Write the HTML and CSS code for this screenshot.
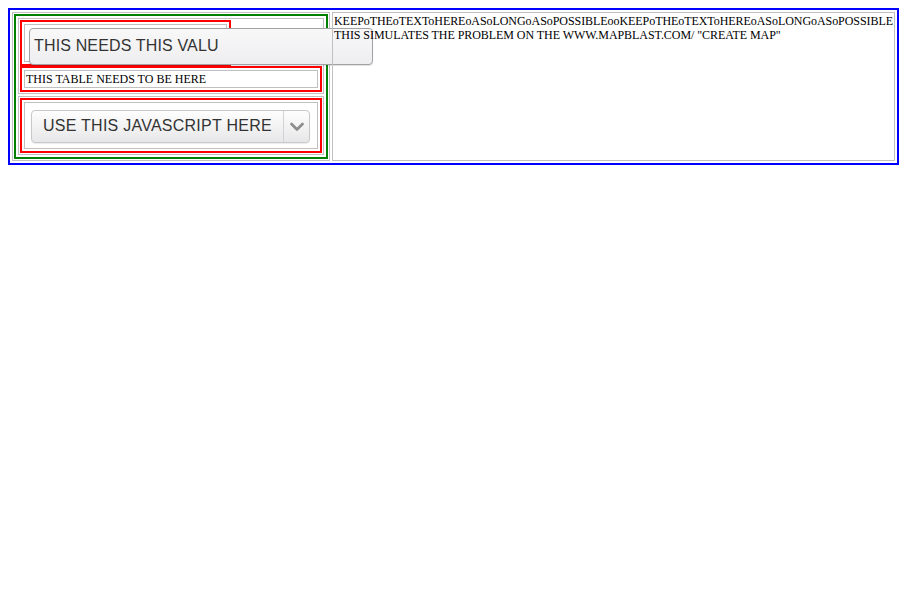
FILE: index.html
```html
<!DOCTYPE html>
<html>
<head>
<meta charset="utf-8">
<link rel="stylesheet" href="styles.css">
</head>
<body>
<table class="outer">
  <tr>
    <td class="c left">
      <table class="green">
        <tr>
          <td class="c">
            <table class="red r1">
              <tr>
                <td class="c">
                  <div class="inwrap"><input class="val" type="text" value="THIS NEEDS THIS VALU"></div>
                </td>
              </tr>
            </table>
            <table class="red full">
              <tr>
                <td class="c txt">THIS TABLE NEEDS TO BE HERE</td>
              </tr>
            </table>
          </td>
        </tr>
        <tr>
          <td class="c">
            <table class="red full">
              <tr>
                <td class="c">
                  <div class="sel">
                    <span class="sel-label">USE THIS JAVASCRIPT HERE</span>
                    <span class="sel-btn">
                      <svg width="14" height="10" viewBox="0 0 14 10"><polyline points="1.5,2 7,7.5 12.5,2" fill="none" stroke="#8c8c8c" stroke-width="2.6" stroke-linecap="round" stroke-linejoin="round"/></svg>
                    </span>
                  </div>
                </td>
              </tr>
            </table>
          </td>
        </tr>
      </table>
    </td>
    <td class="c right">KEEPoTHEoTEXToHEREoASoLONGoASoPOSSIBLEooKEEPoTHEoTEXToHEREoASoLONGoASoPOSSIBLE<br>THIS SIMULATES THE PROBLEM ON THE WWW.MAPBLAST.COM/ "CREATE MAP"</td>
  </tr>
</table>
</body>
</html>
```

FILE: styles.css
```css
html {
  overflow: hidden;
  background: #ffffff;
}
body {
  margin: 8px;
  font-family: "Liberation Serif", "Times New Roman", serif;
  font-size: 12px;
  color: #000;
}
table {
  border-collapse: separate;
  border-spacing: 2px;
  box-sizing: border-box;
}
.c {
  border: 1px solid #c0c0c0;
  padding: 1px;
  vertical-align: top;
  text-align: left;
}
.outer {
  border: 2px solid #0000ff;
}
.green {
  border: 2px solid #008000;
  width: 314px;
}
.red {
  border: 2px solid #ff0000;
}
.r1 {
  width: 211px;
}
.full {
  width: 100%;
}
.txt {
  line-height: 14px;
}
.right {
  white-space: nowrap;
  line-height: 14px;
  letter-spacing: -0.06px;
}
.inwrap {
  width: 199px;
  height: 32px;
}
.val {
  display: block;
  box-sizing: border-box;
  margin: 2px 0 0 3px;
  width: 344px;
  height: 37px;
  padding: 0 4px 2px 4px;
  border: 1px solid #a2a2a6;
  border-radius: 4px;
  background: linear-gradient(#f8f8f9, #eeeef0);
  box-shadow: 0 1px 1px rgba(0, 0, 0, 0.12);
  font-family: "Liberation Sans", Arial, sans-serif;
  font-size: 16px;
  letter-spacing: 0.15px;
  color: #333333;
  outline: none;
}
.sel {
  box-sizing: border-box;
  display: flex;
  align-items: stretch;
  margin: 6px 0 4px 5px;
  width: 279px;
  height: 33px;
  border: 1px solid #c8c8c8;
  border-radius: 4px;
  background: linear-gradient(#fefefe, #e7e7e9);
  box-shadow: 0 1px 1px rgba(0, 0, 0, 0.08);
  font-family: "Liberation Sans", Arial, sans-serif;
  font-size: 16px;
  letter-spacing: 0.25px;
  color: #333333;
}
.sel-label {
  flex: 1;
  display: flex;
  align-items: center;
  padding-left: 11px;
  padding-bottom: 1px;
}
.sel-btn {
  width: 25px;
  border-left: 1px solid #d2d2d4;
  display: flex;
  align-items: center;
  justify-content: center;
}
```
